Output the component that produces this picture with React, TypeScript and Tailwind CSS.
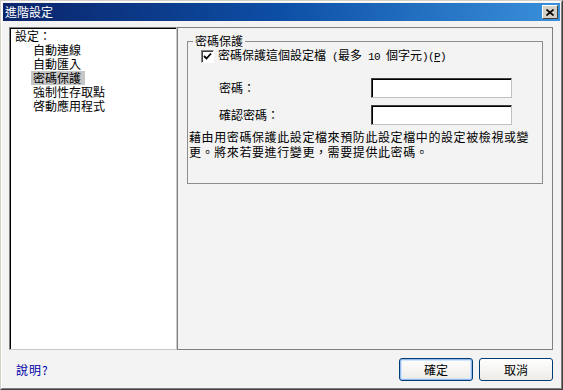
import React from "react";

const font = { fontFamily: '"Noto Sans CJK TC", "Noto Sans CJK SC", sans-serif' };

function CloseIcon() {
  return (
    <svg width="8" height="7" viewBox="0 0 8 7">
      <path d="M0.5 0.5 L7.5 6.5 M7.5 0.5 L0.5 6.5" stroke="#000" strokeWidth="1.6" />
    </svg>
  );
}

function Check() {
  return (
    <svg width="9" height="9" viewBox="0 0 9 9">
      <path d="M1 4 L3.5 6.5 L8 1.5" stroke="#000" strokeWidth="1.8" fill="none" />
    </svg>
  );
}

function Half({ children }: { children: React.ReactNode }) {
  return (
    <span className="font-['Liberation_Mono',monospace] text-[11px] tracking-[-0.6px] whitespace-pre">
      {children}
    </span>
  );
}

export default function App() {
  const items = ["自動連線", "自動匯入", "密碼保護", "強制性存取點", "啓動應用程式"];
  return (
    <div className="w-[563px] h-[390px] text-[12px] leading-[14px] text-black" style={font}>
      <div className="w-full h-full border border-t-[#d4d0c8] border-l-[#d4d0c8] border-r-[#404040] border-b-[#404040] bg-[#f3f3f3]">
        <div className="w-full h-full border border-t-white border-l-white border-r-[#808080] border-b-[#808080] p-[1px] flex flex-col">
          {/* Title bar */}
          <div className="h-[18px] flex items-center justify-between pl-[2px] pr-[2px] bg-gradient-to-r from-[#0a246a] via-[#0d4fa6] to-[#3a90da]">
            <span className="text-white text-[12px] leading-[14px]">進階設定</span>
            <div className="w-[16px] h-[14px] bg-[#d4d0c8] border border-t-white border-l-white border-r-[#404040] border-b-[#404040] flex items-center justify-center">
              <CloseIcon />
            </div>
          </div>
          {/* Body */}
          <div className="flex-1 flex flex-col pt-[6px] pl-[6px] pr-[7px] pb-[5px]">
            <div className="flex h-[323px]">
              {/* Tree */}
              <div className="w-[168px] h-full bg-white border border-t-[#808080] border-l-[#808080] border-r-[#c8c8c8] border-b-[#c8c8c8] shadow-[inset_1px_1px_0_#000]">
                <div className="pt-[1px] pl-[5px] flex flex-col">
                  <div className="h-[14px]">設定：</div>
                  {items.map((it) => (
                    <div key={it} className="h-[14px] pl-[16px] flex">
                      <span className={"pl-[2px] pr-[4px] h-[14px] " + (it === "密碼保護" ? "bg-[#c6c6c6]" : "")}>{it}</span>
                    </div>
                  ))}
                </div>
              </div>
              {/* Right panel */}
              <div className="flex-1 h-full border border-[#808080] pt-[6px] px-[9px]">
                <fieldset className="border border-[#8c8c8c] pb-[24px]">
                  <legend className="ml-[5px] px-[2px] leading-[14px]">密碼保護</legend>
                  <div className="mt-[1px] h-[14px] flex items-center pl-[13px]">
                    <div className="w-[13px] h-[13px] bg-white border border-t-[#808080] border-l-[#808080] border-r-white border-b-white shadow-[inset_1px_1px_0_#404040] flex items-center justify-center">
                      <Check />
                    </div>
                    <span className="ml-[4px] whitespace-nowrap">
                      密碼保護這個設定檔<Half> (</Half>最多<Half> 10 </Half>個字元<Half>)(</Half>
                      <Half>
                        <span className="underline">P</span>
                      </Half>
                      <Half>)</Half>
                    </span>
                  </div>
                  <div className="mt-[15px] flex items-center pl-[31px]">
                    <span className="w-[152px]">密碼：</span>
                    <div className="w-[141px] h-[20px] bg-white border border-t-[#404040] border-l-[#404040] border-r-[#c0c0c0] border-b-[#c0c0c0] shadow-[inset_1px_1px_0_#000]" />
                  </div>
                  <div className="mt-[7px] flex items-center pl-[31px]">
                    <span className="w-[152px]">確認密碼：</span>
                    <div className="w-[141px] h-[20px] bg-white border border-t-[#404040] border-l-[#404040] border-r-[#c0c0c0] border-b-[#c0c0c0] shadow-[inset_1px_1px_0_#000]" />
                  </div>
                  <p className="mt-[4px] pl-[1px] leading-[15px] tracking-[0.6px] whitespace-nowrap">
                    藉由用密碼保護此設定檔來預防此設定檔中的設定被檢視或變
                    <br />
                    更。將來若要進行變更，需要提供此密碼。
                  </p>
                </fieldset>
              </div>
            </div>
            {/* Bottom */}
            <div className="mt-[8px] flex items-center justify-between">
              <span className="ml-[7px] text-[#0000a8] tracking-[1px]">說明?</span>
              <div className="flex gap-[6px]">
                <button className="w-[74px] h-[23px] rounded-[3px] border border-[#003c74] bg-gradient-to-b from-white to-[#ecebe6] shadow-[inset_0_0_0_1px_#98b8ea,inset_0_0_0_2px_#cee7ff] text-[12px]">
                  確定
                </button>
                <button className="w-[74px] h-[23px] rounded-[3px] border border-[#003c74] bg-gradient-to-b from-white to-[#ecebe6] text-[12px]">
                  取消
                </button>
              </div>
            </div>
          </div>
        </div>
      </div>
    </div>
  );
}
